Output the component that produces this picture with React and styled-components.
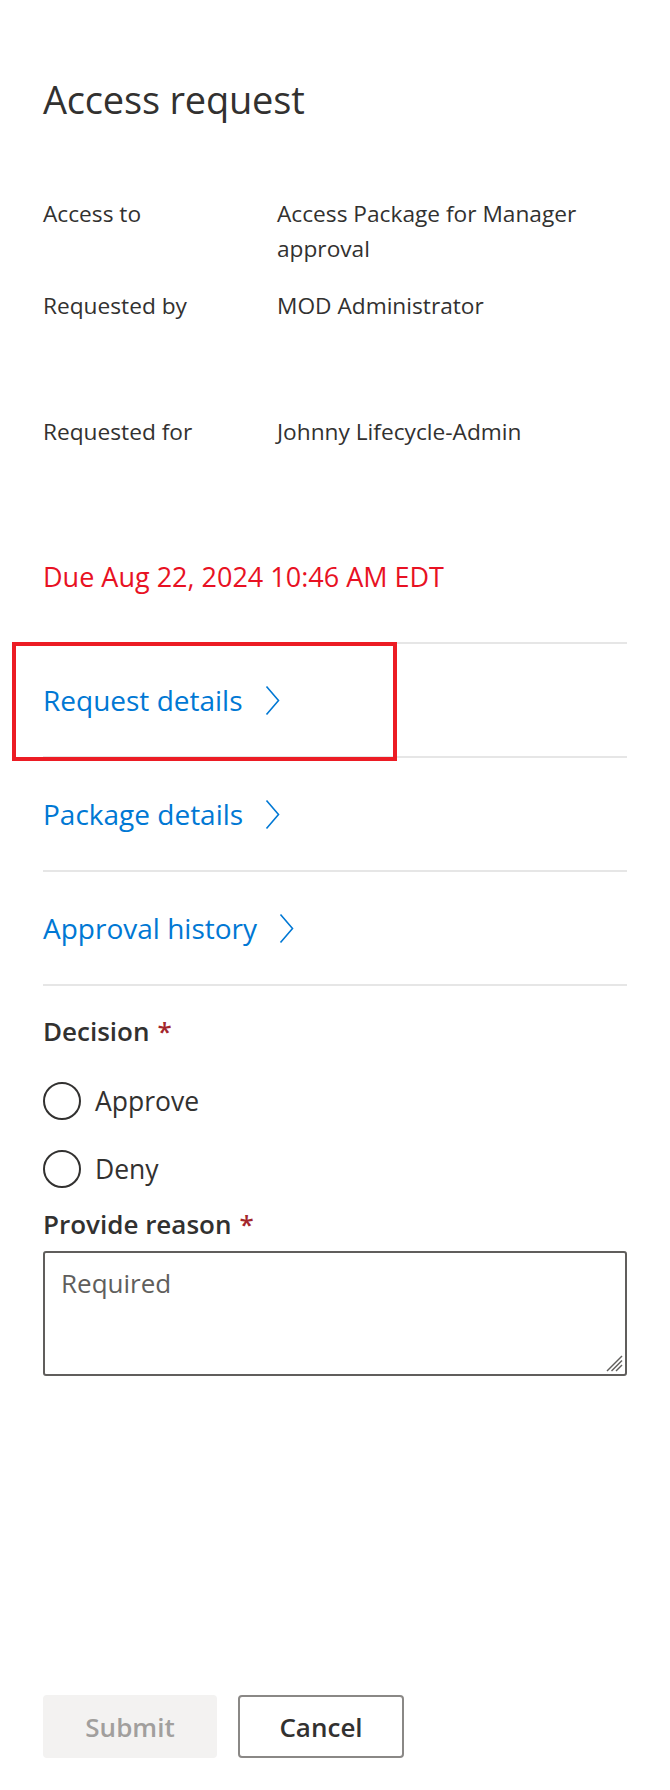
import React from "react";
import styled, { createGlobalStyle } from "styled-components";

const GlobalStyle = createGlobalStyle`
    body {
        margin: 0;
        background: #ffffff;
        color: #323130;
        font-family: "Open Sans", "Noto Sans", sans-serif;
    }
    * { box-sizing: border-box; }
`;

const Panel = styled.div`
    min-height: 100vh;
    display: flex;
    flex-direction: column;
`;

const Content = styled.div`
    padding: 72px 43px 0;
`;

const Title = styled.h1`
    margin: 0;
    font-size: 38px;
    font-weight: 400;
    line-height: 54px;
    letter-spacing: -0.2px;
`;

const Details = styled.div`
    margin-top: 70px;
    display: flex;
    flex-direction: column;
    gap: 22px;
    font-size: 22.7px;
    line-height: 35px;
`;

const DetailRow = styled.div`
    display: grid;
    grid-template-columns: 234px 1fr;
`;

const Value = styled.div`
    padding-right: 10px;
`;

// redacted lines under a person's name, left blank
const Redacted = styled.div`
    height: ${p => p.$h}px;
`;

const Due = styled.div`
    margin-top: 32px;
    font-size: 27px;
    line-height: 36px;
    color: #e81123;
`;

const LinkList = styled.div`
    margin-top: 47px;
    border-bottom: 2px solid #e6e6e6;
`;

const LinkRow = styled.a`
    position: relative;
    display: flex;
    align-items: center;
    height: 114px;
    border-top: 2px solid #e6e6e6;
    color: #0078d4;
    font-size: 28px;
    text-decoration: none;
    cursor: pointer;
`;

const Chevron = styled.svg`
    margin-left: 22px;
    flex: none;
`;

const Highlight = styled.span`
    position: absolute;
    z-index: 1;
    left: -31px;
    top: -2px;
    width: 385px;
    height: 119px;
    border: 4px solid #ec1c24;
    pointer-events: none;
`;

const FieldLabel = styled.div`
    margin-top: ${p => p.$top}px;
    font-size: 26px;
    font-weight: 600;
    line-height: 36px;
`;

const Required = styled.span`
    color: #a4262c;
    padding-left: 8px;
`;

const RadioGroup = styled.div`
    margin-top: 32px;
    display: flex;
    flex-direction: column;
    gap: 28px;
`;

const RadioRow = styled.label`
    display: flex;
    align-items: center;
    gap: 14px;
    height: 40px;
    font-size: 26.5px;
    cursor: pointer;
`;

const RadioCircle = styled.span`
    width: 38px;
    height: 38px;
    border-radius: 50%;
    border: 2px solid #323130;
    flex: none;
`;

const TextBox = styled.div`
    position: relative;
    margin-top: 9px;
`;

const TextArea = styled.textarea`
    display: block;
    width: 100%;
    height: 125px;
    padding: 12px 16px;
    border: 2px solid #605e5c;
    border-radius: 3px;
    font-family: inherit;
    font-size: 26px;
    line-height: 36px;
    color: #323130;
    resize: none;
    outline: none;
    &::placeholder {
        color: #605e5c;
    }
`;

const Grip = styled.svg`
    position: absolute;
    right: 4px;
    bottom: 4px;
`;

const Footer = styled.div`
    margin-top: auto;
    padding: 0 43px 32px;
    display: flex;
    gap: 21px;
`;

const Button = styled.button`
    width: ${p => p.$w}px;
    height: 63px;
    border-radius: 4px;
    font-family: inherit;
    font-size: 26px;
    font-weight: 600;
    border: 2px solid ${p => (p.disabled ? "#f3f2f1" : "#8a8886")};
    background: ${p => (p.disabled ? "#f3f2f1" : "#ffffff")};
    color: ${p => (p.disabled ? "#a19f9d" : "#323130")};
`;

const links = ["Request details", "Package details", "Approval history"];

export default function App() {
    return (
        <Panel>
            <GlobalStyle />
            <Content>
                <Title>Access request</Title>
                <Details>
                    <DetailRow>
                        <div>Access to</div>
                        <Value>Access Package for Manager approval</Value>
                    </DetailRow>
                    <DetailRow>
                        <div>Requested by</div>
                        <Value>
                            MOD Administrator
                            <Redacted $h={69} />
                        </Value>
                    </DetailRow>
                    <DetailRow>
                        <div>Requested for</div>
                        <Value>
                            Johnny Lifecycle-Admin
                            <Redacted $h={78} />
                        </Value>
                    </DetailRow>
                </Details>
                <Due>Due Aug 22, 2024 10:46 AM EDT</Due>

                <LinkList>
                    {links.map((l, i) => (
                        <LinkRow key={l}>
                            {l}
                            <Chevron width="15" height="31" viewBox="0 0 15 31">
                                <polyline points="1.5,1.5 13.5,15.5 1.5,29.5" fill="none" stroke="#0078d4" strokeWidth="1.6" />
                            </Chevron>
                            {i === 0 && <Highlight />}
                        </LinkRow>
                    ))}
                </LinkList>

                <FieldLabel $top={27}>
                    Decision<Required>*</Required>
                </FieldLabel>
                <RadioGroup>
                    <RadioRow>
                        <RadioCircle />
                        Approve
                    </RadioRow>
                    <RadioRow>
                        <RadioCircle />
                        Deny
                    </RadioRow>
                </RadioGroup>

                <FieldLabel $top={17}>
                    Provide reason<Required>*</Required>
                </FieldLabel>
                <TextBox>
                    <TextArea placeholder="Required" />
                    <Grip width="18" height="18" viewBox="0 0 18 18">
                        <g stroke="#605e5c" strokeWidth="1.5">
                            <line x1="2" y1="17" x2="17" y2="2" />
                            <line x1="6.5" y1="17" x2="17" y2="6.5" />
                            <line x1="11" y1="17" x2="17" y2="11" />
                        </g>
                    </Grip>
                </TextBox>
            </Content>
            <Footer>
                <Button $w={174} disabled>Submit</Button>
                <Button $w={166}>Cancel</Button>
            </Footer>
        </Panel>
    );
}
